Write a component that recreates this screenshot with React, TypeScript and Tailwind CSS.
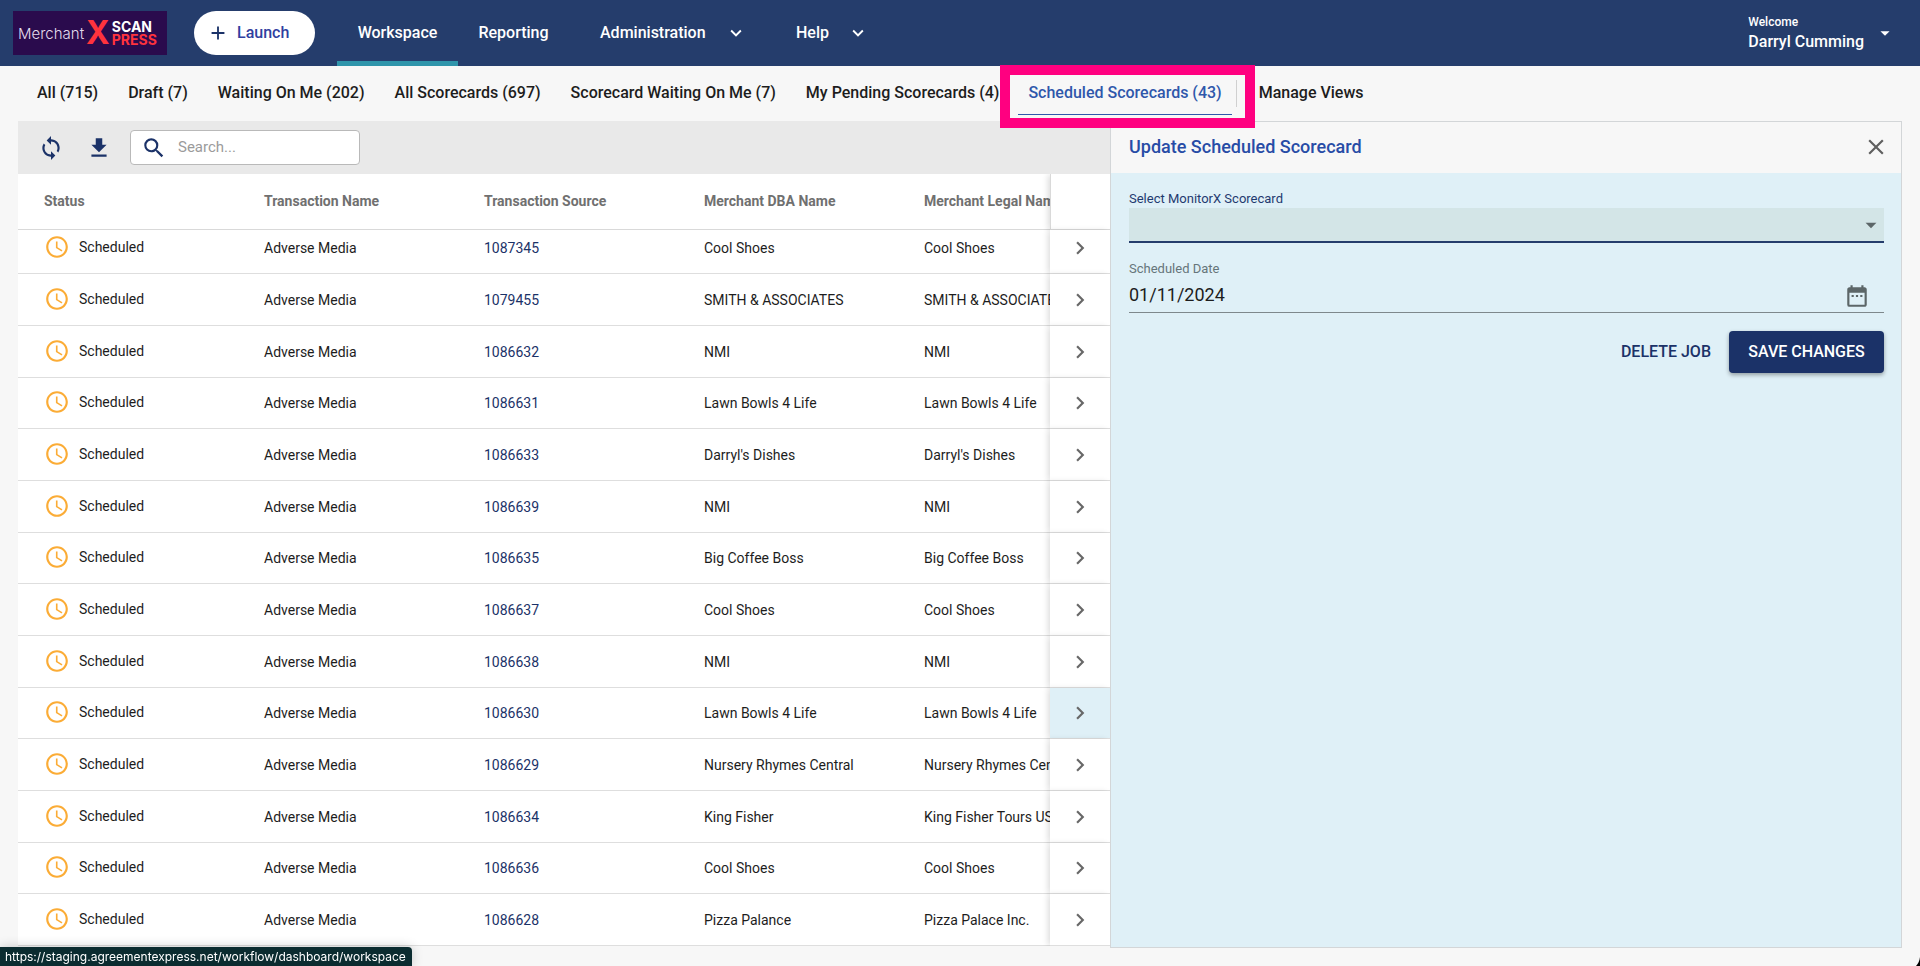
import { useState } from 'react';
import {
  MdAccessTime,
  MdAdd,
  MdArrowDropDown,
  MdChevronRight,
  MdClose,
  MdDateRange,
  MdFileDownload,
  MdKeyboardArrowDown,
  MdSearch,
  MdSync,
} from 'react-icons/md';

const tabs = [
  'All (715)',
  'Draft (7)',
  'Waiting On Me (202)',
  'All Scorecards (697)',
  'Scorecard Waiting On Me (7)',
  'My Pending Scorecards (4)',
  'Scheduled Scorecards (43)',
];

const columns = [
  'Status',
  'Transaction Name',
  'Transaction Source',
  'Merchant DBA Name',
  'Merchant Legal Name',
];

const rows = [
  { source: '1087345', dba: 'Cool Shoes', legal: 'Cool Shoes' },
  { source: '1079455', dba: 'SMITH & ASSOCIATES', legal: 'SMITH & ASSOCIATES' },
  { source: '1086632', dba: 'NMI', legal: 'NMI' },
  { source: '1086631', dba: 'Lawn Bowls 4 Life', legal: 'Lawn Bowls 4 Life' },
  { source: '1086633', dba: "Darryl's Dishes", legal: "Darryl's Dishes" },
  { source: '1086639', dba: 'NMI', legal: 'NMI' },
  { source: '1086635', dba: 'Big Coffee Boss', legal: 'Big Coffee Boss' },
  { source: '1086637', dba: 'Cool Shoes', legal: 'Cool Shoes' },
  { source: '1086638', dba: 'NMI', legal: 'NMI' },
  { source: '1086630', dba: 'Lawn Bowls 4 Life', legal: 'Lawn Bowls 4 Life' },
  { source: '1086629', dba: 'Nursery Rhymes Central', legal: 'Nursery Rhymes Central' },
  { source: '1086634', dba: 'King Fisher', legal: 'King Fisher Tours USA' },
  { source: '1086636', dba: 'Cool Shoes', legal: 'Cool Shoes' },
  { source: '1086628', dba: 'Pizza Palance', legal: 'Pizza Palace Inc.' },
];

function Logo() {
  return (
    <a
      href="#home"
      className="flex h-11 w-[154px] shrink-0 items-center bg-[#2a0b4d] pl-[5px] font-['Inter',sans-serif]"
    >
      <span className="text-[15px] leading-none font-light text-[#e4dcec]">Merchant</span>
      <span className="ml-[2px] text-[32px] leading-none font-bold text-[#ff333d]">X</span>
      <span className="ml-[2px] flex flex-col text-sm leading-[13px] font-bold">
        <span className="text-white">SCAN</span>
        <span className="text-[#ff333d]">PRESS</span>
      </span>
    </a>
  );
}

function TopBar() {
  return (
    <header className="flex h-[66px] shrink-0 items-center bg-[#253d6c] pr-6 pl-[13px] text-white">
      <Logo />
      <button
        type="button"
        className="ml-[27px] flex h-11 w-[121px] shrink-0 items-center gap-2 rounded-full bg-white pl-[13px] text-base font-medium text-[#303f9f]"
      >
        <MdAdd size={22} className="text-[#1b3268]" />
        Launch
      </button>
      <nav className="ml-[22px] flex h-full items-stretch text-base font-medium">
        <a
          href="#workspace"
          className="flex w-[121px] items-center justify-center border-y-[5px] border-t-transparent border-b-[#2f95ab]"
        >
          Workspace
        </a>
        <a href="#reporting" className="flex w-[111px] items-center justify-center">
          Reporting
        </a>
        <button type="button" className="flex w-[196px] items-center justify-between pr-[18px] pl-[31px]">
          Administration
          <MdKeyboardArrowDown size={22} />
        </button>
        <button type="button" className="flex w-[122px] items-center justify-between pr-[18px] pl-[31px]">
          Help
          <MdKeyboardArrowDown size={22} />
        </button>
      </nav>
      <button type="button" className="ml-auto flex items-center gap-[10px] text-left font-medium">
        <span className="flex flex-col pb-[2px]">
          <span className="text-xs leading-5">Welcome</span>
          <span className="text-base leading-5">Darryl Cumming</span>
        </span>
        <MdArrowDropDown size={22} />
      </button>
    </header>
  );
}

function ViewTabs() {
  return (
    <div className="flex h-[55px] shrink-0 items-start gap-3 pt-1 pl-[28px] text-base font-medium whitespace-nowrap text-[#1d1d1d]">
      {tabs.map((tab, i) =>
        i === tabs.length - 1 ? (
          <button
            key={tab}
            type="button"
            className="relative -ml-[2px] h-[45px] border-y border-t-transparent border-b-[#2f57ab] px-[10px] text-[#2f57ab]"
          >
            {tab}
            <span className="pointer-events-none absolute -top-[6px] -right-[23px] -bottom-[14px] -left-[18px] z-10 border-10 border-[#ff0080]" />
          </button>
        ) : (
          <button key={tab} type="button" className="h-[45px] px-[9px]">
            {tab}
          </button>
        ),
      )}
      <span className="mt-[10px] -ml-2 h-[27px] w-px bg-[#d0d0d0]" />
      <button type="button" className="h-[45px] px-[10px]">
        Manage Views
      </button>
    </div>
  );
}

function Toolbar() {
  return (
    <div className="flex h-[53px] items-center bg-[#e9e9e9] pl-5 text-[#1b3268]">
      <button type="button" aria-label="Refresh">
        <MdSync size={26} />
      </button>
      <button type="button" aria-label="Download" className="ml-[22px]">
        <MdFileDownload size={26} />
      </button>
      <label className="ml-[18px] flex h-[35px] w-[230px] items-center gap-[11px] rounded border border-[#b9b9b9] bg-white pl-[10px]">
        <MdSearch size={26} className="shrink-0" />
        <input
          type="search"
          aria-label="Search"
          placeholder="Search..."
          className="w-full min-w-0 bg-transparent text-[15px] outline-none placeholder:text-[#9b9b9b]"
        />
      </label>
    </div>
  );
}

const stickyShadow = 'sticky right-0 shadow-[-3px_0_6px_-1px_rgba(0,0,0,0.14)]';

function rowHeight(index: number) {
  if (index === 0) return 'h-[44px]';
  return index % 3 === 0 ? 'h-[51px]' : 'h-[52px]';
}

function ScorecardTable() {
  return (
    <div className="overflow-hidden">
      <table className="w-full min-w-[1160px] table-fixed border-separate border-spacing-0 bg-white text-left text-sm text-[#1d1d1d]">
        <thead>
          <tr className="h-14 text-[#707070]">
            {columns.map((column) => (
              <th
                key={column}
                className="w-[220px] border-b border-[#d9d9d9] pb-[2px] pl-[26px] font-bold whitespace-nowrap"
              >
                {column}
              </th>
            ))}
            <th className={`w-[60px] border-b border-l border-[#d9d9d9] bg-white ${stickyShadow}`} />
          </tr>
        </thead>
        <tbody>
          {rows.map((row, i) => {
            const cell = `border-b border-[#dedede] pl-[26px] whitespace-nowrap ${i === 0 ? 'pb-[7px]' : ''}`;
            return (
              <tr key={row.source} className={rowHeight(i)}>
                <td
                  className={`border-b border-[#dedede] pl-[26px] whitespace-nowrap ${i === 0 ? 'pb-[9px]' : 'pb-[2px]'}`}
                >
                  <span className="flex items-center gap-[9px]">
                    <MdAccessTime size={26} className="text-[#fbac36]" />
                    Scheduled
                  </span>
                </td>
                <td className={cell}>Adverse Media</td>
                <td className={cell}>
                  <a href={`#${row.source}`} className="text-[#1b3268]">
                    {row.source}
                  </a>
                </td>
                <td className={cell}>{row.dba}</td>
                <td className={cell}>{row.legal}</td>
                <td
                  className={`border-b border-[#dedede] pr-[1px] ${stickyShadow} ${i === 0 ? 'pb-[7px]' : ''} ${
                    i === 9 ? 'bg-[#dff0f7]' : 'bg-white'
                  }`}
                >
                  <button type="button" aria-label={`Open ${row.source}`} className="mx-auto block">
                    <MdChevronRight size={26} className="text-[#686868]" />
                  </button>
                </td>
              </tr>
            );
          })}
        </tbody>
      </table>
    </div>
  );
}

function UpdatePanel() {
  const [date, setDate] = useState('01/11/2024');
  return (
    <aside className="flex flex-col border border-[#d3d6d8] bg-[#dff0f7]">
      <div className="flex h-[51px] items-center justify-between bg-[#f7f7f7] pr-[12px] pb-[2px] pl-[18px]">
        <h2 className="text-lg font-medium text-[#274ca6]">Update Scheduled Scorecard</h2>
        <button type="button" aria-label="Close">
          <MdClose size={26} className="text-[#5f5f5f]" />
        </button>
      </div>
      <form className="flex flex-col pt-4 pr-[17px] pl-[18px]" onSubmit={(e) => e.preventDefault()}>
        <label htmlFor="scorecard" className="text-[13px] leading-[19px] text-[#1f3a70]">
          Select MonitorX Scorecard
        </label>
        <div className="relative">
          <select
            id="scorecard"
            defaultValue=""
            className="block h-[35px] w-full appearance-none border-b-2 border-[#253d6c] bg-[#d3e5e7] px-2 outline-none"
          >
            <option value="" />
          </select>
          <MdArrowDropDown size={26} className="pointer-events-none absolute top-1 right-0 text-[#5c6668]" />
        </div>
        <label htmlFor="date" className="mt-4 text-[13px] leading-5 text-[#66757a]">
          Scheduled Date
        </label>
        <div className="flex h-[34px] items-center justify-between border-b border-[#7e888c] pr-[14px]">
          <input
            id="date"
            type="text"
            value={date}
            onChange={(e) => setDate(e.target.value)}
            className="min-w-0 flex-1 bg-transparent pb-[2px] text-lg text-[#1d1d1d] outline-none"
          />
          <button type="button" aria-label="Choose date">
            <MdDateRange size={26} className="text-[#5c6668]" />
          </button>
        </div>
        <div className="mt-[18px] flex items-center justify-end text-base font-medium">
          <button type="button" className="h-[42px] px-[18px] text-[#1b3268]">
            DELETE JOB
          </button>
          <button
            type="submit"
            className="h-[42px] w-[155px] rounded bg-[#1b3268] text-white shadow-[0_2px_4px_rgba(0,0,0,0.35)]"
          >
            SAVE CHANGES
          </button>
        </div>
      </form>
    </aside>
  );
}

export default function App() {
  return (
    <div className="relative flex min-h-screen flex-col overflow-hidden bg-[#f7f7f7] font-['Roboto',sans-serif]">
      <TopBar />
      <ViewTabs />
      <main className="grid flex-1 grid-cols-[1092fr_792fr] px-[18px] pb-[18px]">
        <section className="min-w-0">
          <Toolbar />
          <ScorecardTable />
        </section>
        <UpdatePanel />
      </main>
      <div className="absolute bottom-0 left-0 rounded-tr bg-[#0b2c30] pr-[6px] pl-[5px] font-['Inter',sans-serif] text-xs leading-[19px] text-white shadow-[0_0_12px_rgba(0,0,0,0.2)]">
        https://staging.agreementexpress.net/workflow/dashboard/workspace
      </div>
      <svg className="absolute right-0 bottom-0" width="4" height="9" viewBox="0 0 4 9">
        <path d="M4 0C3.600 4 2 7 0 9H4Z" fill="#000" />
      </svg>
    </div>
  );
}
